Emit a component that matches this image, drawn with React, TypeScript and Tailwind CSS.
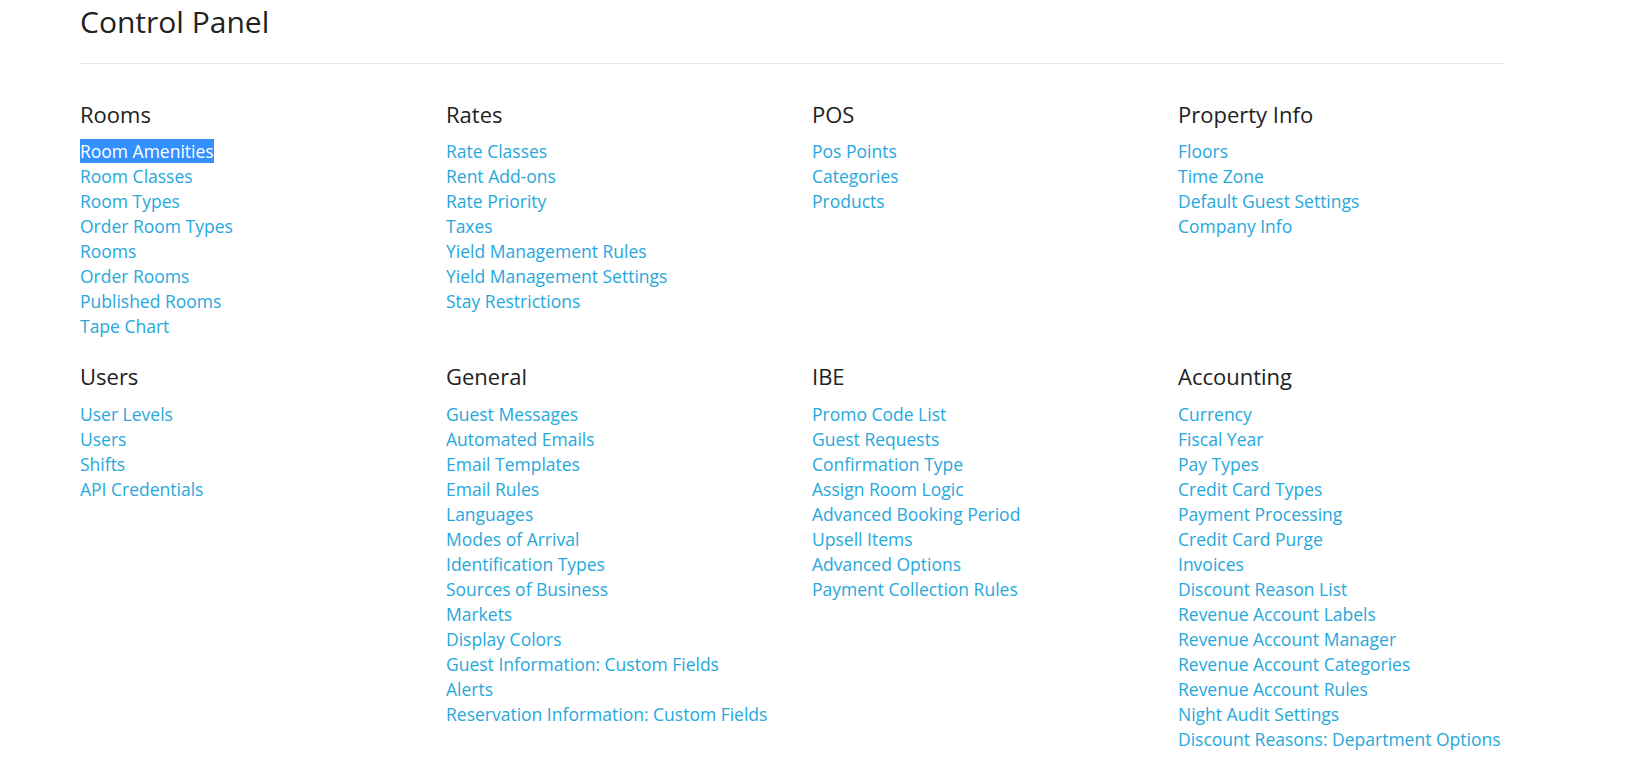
import React from "react";

type Section = { title: string; links: string[] };

const rows: Section[][] = [
  [
    {
      title: "Rooms",
      links: [
        "Room Amenities",
        "Room Classes",
        "Room Types",
        "Order Room Types",
        "Rooms",
        "Order Rooms",
        "Published Rooms",
        "Tape Chart",
      ],
    },
    {
      title: "Rates",
      links: [
        "Rate Classes",
        "Rent Add-ons",
        "Rate Priority",
        "Taxes",
        "Yield Management Rules",
        "Yield Management Settings",
        "Stay Restrictions",
      ],
    },
    { title: "POS", links: ["Pos Points", "Categories", "Products"] },
    {
      title: "Property Info",
      links: ["Floors", "Time Zone", "Default Guest Settings", "Company Info"],
    },
  ],
  [
    { title: "Users", links: ["User Levels", "Users", "Shifts", "API Credentials"] },
    {
      title: "General",
      links: [
        "Guest Messages",
        "Automated Emails",
        "Email Templates",
        "Email Rules",
        "Languages",
        "Modes of Arrival",
        "Identification Types",
        "Sources of Business",
        "Markets",
        "Display Colors",
        "Guest Information: Custom Fields",
        "Alerts",
        "Reservation Information: Custom Fields",
      ],
    },
    {
      title: "IBE",
      links: [
        "Promo Code List",
        "Guest Requests",
        "Confirmation Type",
        "Assign Room Logic",
        "Advanced Booking Period",
        "Upsell Items",
        "Advanced Options",
        "Payment Collection Rules",
      ],
    },
    {
      title: "Accounting",
      links: [
        "Currency",
        "Fiscal Year",
        "Pay Types",
        "Credit Card Types",
        "Payment Processing",
        "Credit Card Purge",
        "Invoices",
        "Discount Reason List",
        "Revenue Account Labels",
        "Revenue Account Manager",
        "Revenue Account Categories",
        "Revenue Account Rules",
        "Night Audit Settings",
        "Discount Reasons: Department Options",
      ],
    },
  ],
];

export default function App() {
  return (
    <div
      className="min-h-[763px] w-full bg-white pl-[80px] text-[#333]"
      style={{ fontFamily: '"Open Sans", "Liberation Sans", sans-serif' }}
    >
      <div className="w-[1425px] pt-[5px]">
        <h1 className="text-[30px] leading-[33px] font-normal text-[#222]">Control Panel</h1>
        <div className="mt-[25px] h-px bg-[#e8e8e8]" />
      </div>
      <div className="mt-[38px] flex flex-col gap-[25px]">
        {rows.map((row, ri) => (
          <div key={ri} className="grid grid-cols-[366px_366px_366px_366px]">
            {row.map((sec) => (
              <div key={sec.title}>
                <h2
                  className={`text-[22px] leading-[24px] font-normal text-[#222] ${
                    ri === 0 ? "mb-[13px]" : "mb-[14px]"
                  }`}
                >
                  {sec.title}
                </h2>
                <ul className="flex flex-col">
                  {sec.links.map((l) => (
                    <li key={l} className="text-[17.5px] leading-[25px]">
                      {l === "Room Amenities" ? (
                        <a className="bg-[#3390ff] text-white">{l}</a>
                      ) : (
                        <a className="text-[#27a8dc]">{l}</a>
                      )}
                    </li>
                  ))}
                </ul>
              </div>
            ))}
          </div>
        ))}
      </div>
    </div>
  );
}
